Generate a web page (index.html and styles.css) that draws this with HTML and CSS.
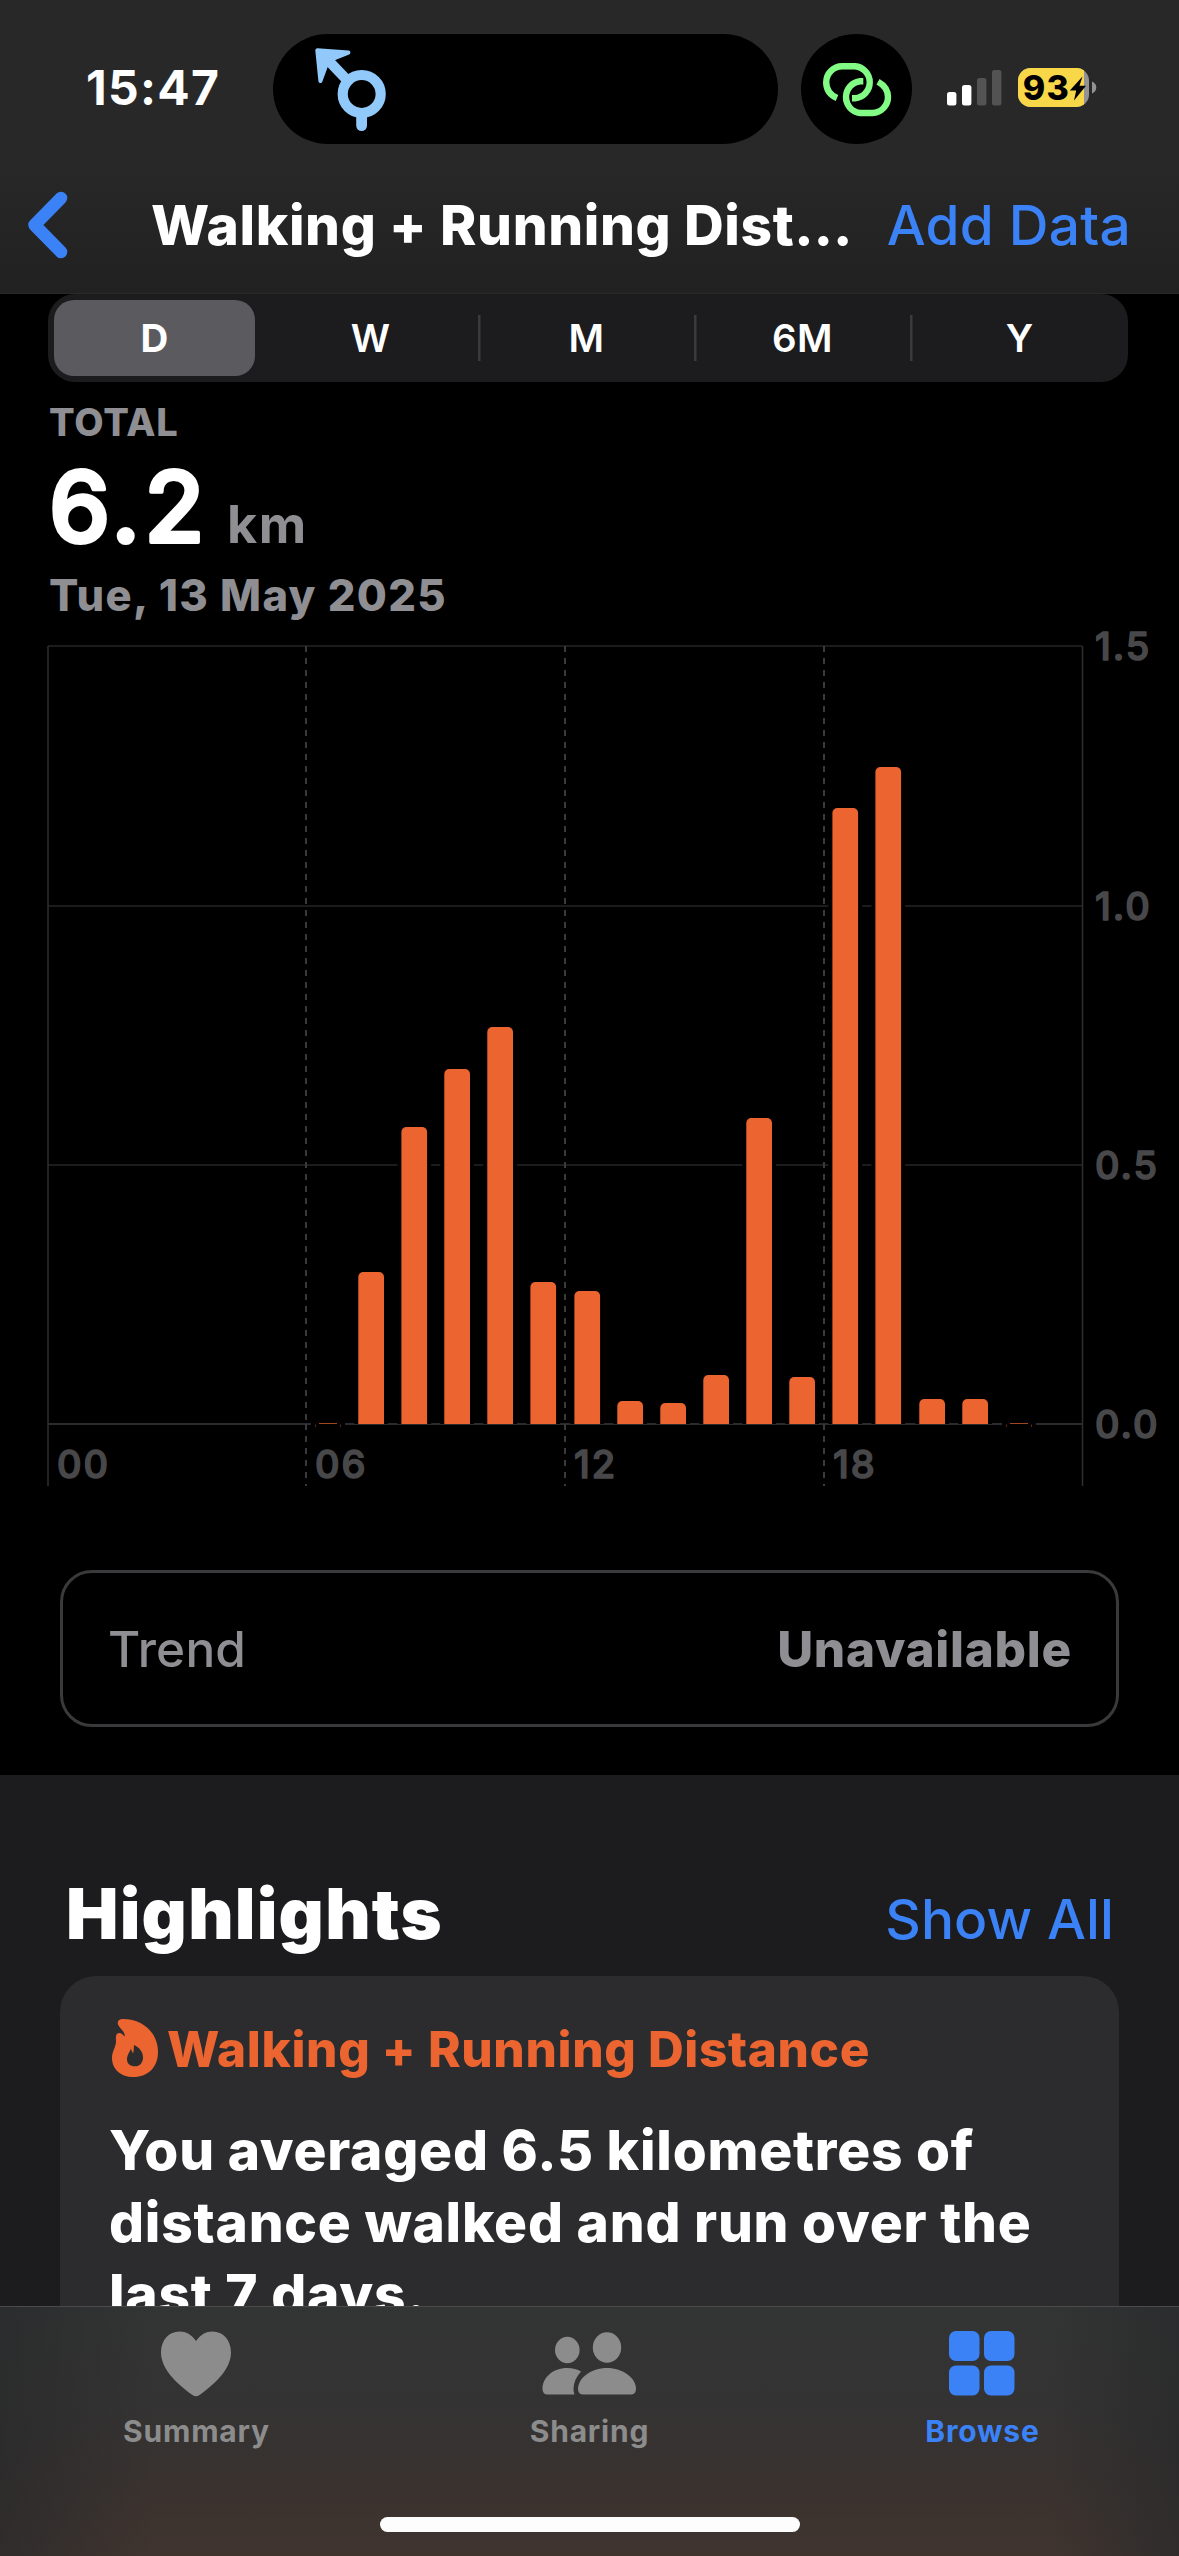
FILE: index.html
```html
<!DOCTYPE html>
<html lang="en">
<head>
<meta charset="utf-8">
<title>Walking + Running Distance</title>
<link rel="stylesheet" href="styles.css">
</head>
<body>
<div class="screen">
  <header class="header">
    <div class="status">
      <div class="time">15:47</div>
      <div class="island">
        <svg width="52" height="92" viewBox="313 43 52 92" class="route">
          <g fill="none" stroke="#92c9fb" stroke-linecap="round">
            <circle cx="361.7" cy="94" r="19" stroke-width="10.2"/>
            <path d="M361.6 114V125.6" stroke-width="10.8"/>
            <path d="M325 57L347 80" stroke-width="10.4" stroke-linecap="butt"/>
          </g>
          <path d="M317.3 50.2L348.4 52.6L331.5 59.5L326.5 64.5L320.4 81Z" fill="#92c9fb" stroke="#92c9fb" stroke-width="4" stroke-linejoin="round"/>
        </svg>
      </div>
      <div class="link">
        <svg width="70" height="56" viewBox="821 60 70 56" fill="none" stroke="#82fc84" stroke-width="6.4">
          <path d="M836 97C829 94 825.2 88 825.2 81.300A16 16 0 0 1 841.200 65.300H854A16 16 0 0 1 854 97.200H851"/>
          <path d="M862.300 80.200H859.200A16 16 0 0 0 859.200 112H871.500A16 16 0 0 0 887 96C887 89.500 883 84 877 80.700"/>
        </svg>
      </div>
      <svg class="signal" width="55" height="36" viewBox="0 0 55 36">
        <rect x="0" y="22" width="9.400" height="13.500" rx="2.500" fill="#fff"/>
        <rect x="15" y="15" width="9.400" height="20.500" rx="2.500" fill="#fff"/>
        <rect x="30" y="8" width="9.400" height="27.500" rx="2.500" fill="#535353"/>
        <rect x="45" y="0" width="9.400" height="35.500" rx="2.500" fill="#535353"/>
      </svg>
      <svg class="battery" width="79" height="39" viewBox="0 0 79 39">
        <defs><clipPath id="charge"><rect width="66" height="39"/></clipPath></defs>
        <rect width="71" height="39" rx="12.500" fill="#939393"/>
        <rect width="71" height="39" rx="12.500" fill="#f8d749" clip-path="url(#charge)"/>
        <path d="M74 13.500C76.500 14.500 78.300 16.500 78.300 19.500S76.500 24.500 74 25.500Z" fill="#939393"/>
        <text x="4.800" y="31.600" class="level">93</text>
        <path d="M64.500 8.500L51.800 22.500H58.200L56 32.500L68 17.800H61.500Z" fill="#000"/>
      </svg>
    </div>
    <nav class="nav">
      <svg width="41" height="68" viewBox="0 0 41 68" fill="none" stroke="#3b82f7" stroke-width="12.500" stroke-linecap="round" stroke-linejoin="round"><path d="M34 7L7.500 34L34 61"/></svg>
      <h1 class="nav-title">Walking + Running Dist…</h1>
      <a class="nav-action">Add Data</a>
    </nav>
  </header>

  <main class="content">
    <div class="segments">
      <div class="segment selected">D</div>
      <div class="segment">W</div>
      <div class="segment divided">M</div>
      <div class="segment divided">6M</div>
      <div class="segment divided">Y</div>
    </div>

    <section class="total">
      <div class="total-label">TOTAL</div>
      <div class="total-value">
        <svg width="170" height="80" viewBox="0 0 170 80"><text x="0" y="78.500" class="big">6.2</text></svg>
        <span class="unit">km</span>
      </div>
      <div class="total-date">Tue, 13 May 2025</div>
    </section>

    <svg class="chart" width="1179" height="870" viewBox="0 625 1179 870">
      <defs><clipPath id="plot"><rect x="48" y="640" width="1035" height="784"/></clipPath></defs>
      <g class="grid">
        <path d="M48 646H1082M48 906H1082M48 1165H1082"/>
        <path class="base" d="M48 1424H1082"/>
      </g>
      <g class="bars" clip-path="url(#plot)">
        <rect x="358.300" y="1272" width="25.700" height="170" rx="5"/>
        <rect x="401.400" y="1127" width="25.700" height="320" rx="5"/>
        <rect x="444.300" y="1069" width="25.700" height="370" rx="5"/>
        <rect x="487.300" y="1027" width="25.700" height="410" rx="5"/>
        <rect x="530.400" y="1282" width="25.700" height="160" rx="5"/>
        <rect x="574.400" y="1291" width="25.700" height="150" rx="5"/>
        <rect x="617.300" y="1401" width="25.700" height="40" rx="5"/>
        <rect x="660.300" y="1403" width="25.700" height="40" rx="5"/>
        <rect x="703.300" y="1375" width="25.700" height="60" rx="5"/>
        <rect x="746.300" y="1118" width="25.700" height="320" rx="5"/>
        <rect x="789.300" y="1377" width="25.700" height="60" rx="5"/>
        <rect x="832.400" y="808" width="25.700" height="630" rx="5"/>
        <rect x="875.400" y="767" width="25.700" height="670" rx="5"/>
        <rect x="919.300" y="1399" width="25.700" height="40" rx="5"/>
        <rect x="962.300" y="1399" width="25.700" height="40" rx="5"/>
      </g>
      <g class="trace">
        <path class="gap" d="M311 1424H345M1002 1424H1036"/>
        <path d="M319 1423.500H337M1010 1423.500H1028"/>
        <path class="foot" d="M315.500 1427V1424.500M340.500 1427V1424.500M1006.500 1427V1424.500M1031.500 1427V1424.500"/>
      </g>
      <path class="edge" d="M48 646V1486M1082.500 646V1486"/>
      <path class="dash" d="M306 646V1424M565 646V1424M824 646V1424M306 1424V1486M565 1424V1486M824 1424V1486"/>
      <g class="axis">
        <text x="1095" y="660">1.5</text>
        <text x="1095" y="919.500">1.0</text>
        <text x="1095" y="1178.500">0.5</text>
        <text x="1095" y="1437.700">0.0</text>
        <text x="57" y="1477.500">00</text>
        <text x="315" y="1477.500">06</text>
        <text x="574" y="1477.500">12</text>
        <text x="833" y="1477.500">18</text>
      </g>
    </svg>

    <div class="trend">
      <span class="trend-name">Trend</span>
      <span class="trend-value">Unavailable</span>
    </div>

    <section class="highlights">
      <div class="highlights-head">
        <h2>Highlights</h2>
        <a>Show All</a>
      </div>
      <article class="card">
        <div class="card-title">
          <svg width="46" height="58" viewBox="0 0 46 58"><path fill="#ec6530" fill-rule="evenodd" d="M11 0C31 0 46 14 46 33C46 48 36 58 21.500 58C9 58 0 50.500 0 39C0 32.500 3.500 29 4 23C4 20.500 3.600 18.500 4.200 16.500C4.800 14.300 7 13.600 9 14.500C10.500 15.200 11.600 16.500 12.800 17.500C13 13 9 10.500 6.500 6.500C4.500 3 6.500 0 11 0ZM22 26C21.500 29 22.300 31.500 21 34.500C20.300 33 19.500 31.500 19 29.500C17.500 33.500 15 36 15 40.500C15 44.700 18.300 47.300 22.800 47.300C27.800 47.300 31 43.800 31 38.500C31 33 27.500 28.500 22 26Z"/></svg>
          <span>Walking + Running Distance</span>
        </div>
        <p class="card-text">You averaged 6.5 kilometres of distance walked and run over the last 7 days.</p>
      </article>
    </section>
  </main>

  <footer class="tabbar">
    <div class="tabs">
      <div class="tab">
        <svg width="70" height="66" viewBox="0 0 70 66"><path fill="currentColor" d="M35 10C30.500 3.500 25 .5 18.500 .5C8 .5 0 9 0 21.500C0 37 14 51.500 31.500 64Q35 66.500 38.500 64C56 51.500 70 37 70 21.500C70 9 62 .5 51.500 .5C45 .5 39.500 3.500 35 10Z"/></svg>
        <span>Summary</span>
      </div>
      <div class="tab">
        <svg width="94" height="66" viewBox="0 0 94 66" fill="currentColor">
          <ellipse cx="25.300" cy="19" rx="12.300" ry="13.200"/>
          <ellipse cx="65" cy="16.500" rx="14.200" ry="15.200"/>
          <path d="M25 37C31 37 35.500 38.500 39 40.500C34 46 31.500 52 31.500 58Q31.500 61.500 32.500 63.500H6Q.5 63.500 .5 58C.5 46.500 11 37 25 37Z"/>
          <path d="M65 37C81 37 94 47 94 58Q94 63.500 88.500 63.500H41.500Q36 63.500 36 58C36 47 49 37 65 37Z"/>
        </svg>
        <span>Sharing</span>
      </div>
      <div class="tab active">
        <svg width="66" height="66" viewBox="0 0 66 66" fill="currentColor">
          <rect x="0" y="0" width="30.500" height="30" rx="7"/>
          <rect x="35" y="0" width="30.500" height="30" rx="7"/>
          <rect x="0" y="34.500" width="30.500" height="30" rx="7"/>
          <rect x="35" y="34.500" width="30.500" height="30" rx="7"/>
        </svg>
        <span>Browse</span>
      </div>
    </div>
    <div class="home-indicator"></div>
  </footer>
</div>
</body>
</html>
```

FILE: styles.css
```css
* { box-sizing: border-box; margin: 0; padding: 0; }

body {
  background: #000;
  color: #fff;
  font-family: Inter, "Liberation Sans", sans-serif;
}

svg { display: block; flex: none; }

.screen {
  width: 1179px;
  height: 2556px;
  display: flex;
  flex-direction: column;
  overflow: hidden;
}

/* Status bar and navigation */
.header {
  flex: none;
  height: 294px;
  background: linear-gradient(#282828 0, #282828 55%, #212121 100%);
  border-bottom: 1px solid #2a2a2a;
}
.status { display: flex; align-items: center; height: 178px; padding-left: 86px; }
.time {
  width: 187px;
  margin-bottom: 3px;
  font-size: 48px;
  font-weight: 700;
  letter-spacing: 1.3px;
}
.island {
  width: 505px;
  height: 110px;
  border-radius: 55px;
  background: #000;
  display: flex;
  align-items: center;
  padding-left: 40px;
}
.route { overflow: visible; }
.link {
  width: 111px;
  height: 110px;
  margin-left: 23px;
  border-radius: 50%;
  background: #000;
  display: flex;
  align-items: center;
  justify-content: center;
}
.signal { margin: 0 0 3px 35px; }
.battery { margin: 0 0 3px 16px; }
.level { font-size: 34px; font-weight: 800; letter-spacing: 1.2px; }
.nav { display: flex; align-items: center; height: 94px; padding: 0 48px 0 27px; }
.nav-title {
  margin-left: 83px;
  font-size: 55px;
  font-weight: 800;
  letter-spacing: .62px;
  white-space: nowrap;
}
.nav-action {
  margin-left: auto;
  color: #3b82f7;
  font-size: 55px;
  font-weight: 500;
  letter-spacing: .25px;
  white-space: nowrap;
}

.content { flex: 1; min-height: 0; overflow: hidden; }

/* Period picker */
.segments {
  display: grid;
  grid-template-columns: 213.5px 216px 216px 216px 218.5px;
  width: 1080px;
  height: 88px;
  margin-left: 48px;
  border-radius: 27px;
  background: #1c1c1e;
}
.segment {
  display: flex;
  align-items: center;
  justify-content: center;
  padding-left: 2px;
  font-size: 38.5px;
  font-weight: 600;
  letter-spacing: .4px;
}
.selected {
  margin: 6px 6.5px 6px 6px;
  padding-left: 0;
  border-radius: 20px;
  background: #5b5a5f;
  font-weight: 700;
}
.divided { background: linear-gradient(#3a3a3c, #3a3a3c) no-repeat 0 50% / 2.500px 46px; }

/* Total */
.total { padding: 13px 0 0 49px; color: #8e8e93; white-space: nowrap; }
.total-label { font-size: 38px; font-weight: 800; line-height: 54px; letter-spacing: .8px; }
.total-value { display: flex; align-items: baseline; height: 102px; margin-top: 14px; }
.total-value svg { overflow: visible; }
.big {
  fill: #fff;
  stroke: #fff;
  stroke-width: 4px;
  stroke-linejoin: round;
  font-size: 97px;
  font-weight: 500;
  letter-spacing: 4px;
}
.unit { margin-left: 8px; font-size: 52px; font-weight: 700; line-height: 60px; letter-spacing: 1.5px; }
.total-date { font-size: 43.5px; font-weight: 800; line-height: 60px; letter-spacing: 1.35px; }

/* Chart */
.grid path { fill: none; stroke: #1c1c1e; stroke-width: 2px; }
.grid .base { stroke: #2c2c2e; }
.bars rect { fill: #ec6530; stroke: #000; stroke-width: 8px; paint-order: stroke; }
.trace path { fill: none; stroke: #a3461f; stroke-width: 1px; }
.trace .gap { stroke: #000; stroke-width: 3px; }
.trace .foot { stroke: #5c2812; }
.edge { stroke: #2f2f31; stroke-width: 1.5px; }
.dash { stroke: #3a3a3c; stroke-width: 2px; stroke-dasharray: 6 6; }
.axis {
  fill: #48484a;
  stroke: #48484a;
  stroke-width: 1.5px;
  stroke-linejoin: round;
  font-size: 38px;
  font-weight: 500;
  letter-spacing: 2px;
}

/* Trend */
.trend {
  display: flex;
  align-items: center;
  justify-content: space-between;
  width: 1059px;
  height: 157px;
  margin: 75px 0 48px 60px;
  padding: 0 44px 0 45px;
  border: 3px solid #3a3a3c;
  border-radius: 32px;
  color: #8e8e93;
  font-size: 49.5px;
}
.trend-name { font-weight: 500; letter-spacing: .2px; }
.trend-value { font-weight: 800; letter-spacing: .7px; }

/* Highlights */
.highlights { height: 700px; padding: 97px 60px 0; background: #1c1c1e; }
.highlights-head {
  display: flex;
  align-items: baseline;
  justify-content: space-between;
  height: 104px;
  padding: 0 5px 0 6px;
}
.highlights-head h2 { font-size: 70px; font-weight: 900; line-height: 84px; letter-spacing: 1.2px; }
.highlights-head a { color: #3b82f7; font-size: 55px; font-weight: 500; letter-spacing: .1px; }
.card { height: 500px; padding: 43px 48px 0 49px; border-radius: 36px; background: #2c2c2e; }
.card-title {
  display: flex;
  align-items: center;
  height: 60px;
  color: #ec6530;
  font-size: 49.5px;
  font-weight: 800;
  letter-spacing: .63px;
}
.card-title svg { margin: 0 9px 2px 3px; }
.card-text { margin-top: 35px; font-size: 55px; font-weight: 800; line-height: 72px; letter-spacing: .77px; }

/* Tab bar */
.tabbar {
  flex: none;
  height: 250px;
  border-top: 1px solid #4a4a4b;
  background:
    linear-gradient(90deg, rgba(40, 41, 42, .7), rgba(40, 41, 42, 0) 13%, rgba(40, 41, 42, 0) 89%, rgba(40, 41, 42, .7)),
    linear-gradient(#333434 0, #343333 40%, #39322f 70%, #40342f 100%);
}
.tabs { display: flex; height: 210px; padding-top: 24px; color: #8c8c8c; }
.tab {
  flex: 1;
  display: flex;
  flex-direction: column;
  align-items: center;
  font-size: 30px;
  font-weight: 700;
  line-height: 36px;
  letter-spacing: .8px;
}
.tab svg { margin-right: 2px; }
.tab span { margin-top: 16px; }
.active { color: #3b82f7; }
.home-indicator { width: 420px; height: 15px; margin: 0 auto; border-radius: 8px; background: #fdfdfd; }
```
